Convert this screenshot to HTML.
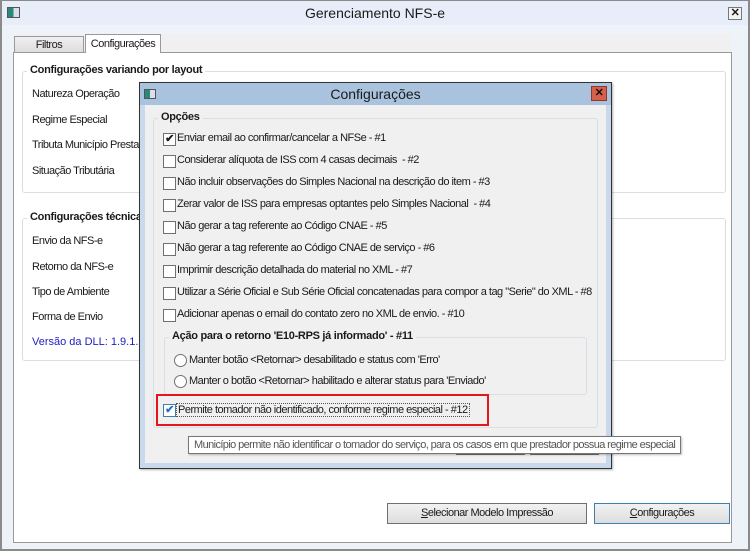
<!DOCTYPE html>
<html><head><meta charset="utf-8"><style>
*{margin:0;padding:0;box-sizing:border-box}
body{width:750px;height:551px;position:relative;overflow:hidden;background:#eef2f9;font-family:"Liberation Sans",sans-serif;font-size:11px;letter-spacing:-0.5px;color:#1a1a1a}
.a{position:absolute;white-space:nowrap}
.grp{position:absolute;border:1px solid #d5dfe5;border-radius:3px}
.gt{position:absolute;background:#fff;padding:0 3px;font-weight:bold;top:-8px;left:4px;font-size:11px;letter-spacing:-0.3px}
.cb{position:absolute;width:13px;height:13px;border:1px solid #707070;background:#fff}
.rb{position:absolute;width:13px;height:13px;border:1px solid #707070;border-radius:50%;background:#fff}
.btn{position:absolute;border:1px solid #707070;background:linear-gradient(#f2f2f2,#dddddd);text-align:center;line-height:19px}
</style></head><body>
<div class="a" style="left:0;top:0;width:750px;height:551px;border:2px solid #8a8a8a;border-top:1px solid #8a8a8a"></div>
<div class="a" style="left:2px;top:1px;width:746px;height:24px;background:#e8eef9"></div>
<div class="a" style="left:7px;top:7px;width:13px;height:11px;border:1px solid #555;background:linear-gradient(90deg,#2a8a7a 50%,#dde 50%)"></div>
<div class="a" style="left:0;width:750px;top:5px;text-align:center;font-size:14px;letter-spacing:0">Gerenciamento NFS-e</div>
<div class="a" style="left:728px;top:7px;width:14px;height:13px;border:1px solid #777;background:#f4f4f4;font-weight:bold;font-size:11px;text-align:center;line-height:11px">✕</div>
<div class="a" style="left:13px;top:34px;width:718px;height:18px;background:#f0f0f0"></div>
<div class="a" style="left:14px;top:36px;width:70px;height:17px;border:1px solid #999;border-bottom:none;background:linear-gradient(#f0f0f0,#dcdcdc);text-align:center;line-height:16px">Filtros</div>
<div class="a" style="left:85px;top:34px;width:76px;height:19px;border:1px solid #999;border-bottom:none;background:#fff;text-align:center;line-height:18px;z-index:2">Configurações</div>
<div class="a" style="left:13px;top:52px;width:719px;height:491px;border:1px solid #999;background:#fff"></div>
<div class="grp" style="left:22px;top:71px;width:704px;height:122px"><div class="gt">Configurações variando por layout</div></div>
<div class="a" style="left:32px;top:88px">Natureza Operação</div>
<div class="a" style="left:32px;top:114px">Regime Especial</div>
<div class="a" style="left:32px;top:139px">Tributa Município Prestador</div>
<div class="a" style="left:32px;top:165px">Situação Tributária</div>
<div class="grp" style="left:22px;top:218px;width:704px;height:143px"><div class="gt">Configurações técnicas</div></div>
<div class="a" style="left:32px;top:235px">Envio da NFS-e</div>
<div class="a" style="left:32px;top:261px">Retorno da NFS-e</div>
<div class="a" style="left:32px;top:286px">Tipo de Ambiente</div>
<div class="a" style="left:32px;top:311px">Forma de Envio</div>
<div class="a" style="left:32px;top:336px;color:#2020c0;letter-spacing:0">Versão da DLL: 1.9.1.11</div>
<div class="btn" style="left:387px;top:503px;width:200px;height:21px"><u>S</u>elecionar Modelo Impressão</div>
<div class="btn" style="left:594px;top:503px;width:136px;height:21px;border-color:#3c7fb1"><u>C</u>onfigurações</div>

<!-- dialog -->
<div class="a" style="left:139px;top:82px;width:473px;height:387px;border:1px solid #333;background:#f0f0f0;box-shadow:1px 1px 2px rgba(0,0,0,.3)"></div>
<div class="a" style="left:140px;top:83px;width:471px;height:22px;background:#a9c3df"></div>
<div class="a" style="left:140px;top:105px;width:471px;height:363px;border:5px solid #c9d9ec;border-top:none"></div>
<div class="a" style="left:144px;top:89px;width:12px;height:10px;border:1px solid #555;background:linear-gradient(90deg,#2a8a7a 50%,#dde 50%)"></div>
<div class="a" style="left:140px;width:471px;top:86px;text-align:center;font-size:14px;letter-spacing:0">Configurações</div>
<div class="a" style="left:591px;top:86px;width:16px;height:15px;border:1px solid #8a3a2a;background:#d8604a;font-weight:bold;text-align:center;line-height:13px;color:#111">✕</div>
<div class="grp" style="left:153px;top:118px;width:445px;height:310px;background:#f0f0f0"><div class="gt" style="background:#f0f0f0">Opções</div></div>
<div class="cb" style="left:163px;top:133px;font-size:11px;line-height:10px;text-align:center;font-weight:bold">✔</div>
<div class="a" style="left:177px;top:132px">Enviar email ao confirmar/cancelar a NFSe - #1</div>
<div class="cb" style="left:163px;top:155px"></div><div class="a" style="left:177px;top:154px">Considerar alíquota de ISS com 4 casas decimais &nbsp;- #2</div>
<div class="cb" style="left:163px;top:177px"></div><div class="a" style="left:177px;top:176px">Não incluir observações do Simples Nacional na descrição do item - #3</div>
<div class="cb" style="left:163px;top:199px"></div><div class="a" style="left:177px;top:198px">Zerar valor de ISS para empresas optantes pelo Simples Nacional &nbsp;- #4</div>
<div class="cb" style="left:163px;top:221px"></div><div class="a" style="left:177px;top:220px">Não gerar a tag referente ao Código CNAE - #5</div>
<div class="cb" style="left:163px;top:243px"></div><div class="a" style="left:177px;top:242px">Não gerar a tag referente ao Código CNAE de serviço - #6</div>
<div class="cb" style="left:163px;top:265px"></div><div class="a" style="left:177px;top:264px">Imprimir descrição detalhada do material no XML - #7</div>
<div class="cb" style="left:163px;top:287px"></div><div class="a" style="left:177px;top:286px">Utilizar a Série Oficial e Sub Série Oficial concatenadas para compor a tag "Serie" do XML - #8</div>
<div class="cb" style="left:163px;top:309px"></div><div class="a" style="left:177px;top:308px">Adicionar apenas o email do contato zero no XML de envio. - #10</div>
<div class="grp" style="left:164px;top:337px;width:423px;height:58px"><div class="gt" style="background:#f0f0f0">Ação para o retorno 'E10-RPS já informado' - #11</div></div>
<div class="rb" style="left:174px;top:354px"></div><div class="a" style="left:189px;top:354px">Manter botão &lt;Retornar&gt; desabilitado e status com 'Erro'</div>
<div class="rb" style="left:174px;top:375px"></div><div class="a" style="left:189px;top:375px">Manter o botão &lt;Retornar&gt; habilitado e alterar status para 'Enviado'</div>
<div class="a" style="left:156px;top:394px;width:333px;height:32px;border:2px solid #e8141b"></div>
<div class="cb" style="left:163px;top:404px;border-color:#3c7fb1;color:#2a6fc0;font-size:11px;line-height:10px;text-align:center;font-weight:bold">✔</div>
<div class="a" style="left:176px;top:403px;border:1px dotted #555;padding:0 1px">Permite tomador não identificado, conforme regime especial - #12</div>
<div class="btn" style="left:456px;top:437px;width:69px;height:18px"></div>
<div class="btn" style="left:530px;top:437px;width:69px;height:18px"></div>
<div class="a" style="left:188px;top:436px;width:493px;height:18px;border:1px solid #767676;background:#fff;box-shadow:1px 1px 2px rgba(0,0,0,.25);padding-left:5px;line-height:16px;color:#555;letter-spacing:-0.6px;overflow:hidden">Município permite não identificar o tomador do serviço, para os casos em que prestador possua regime especial</div>
</body></html>
